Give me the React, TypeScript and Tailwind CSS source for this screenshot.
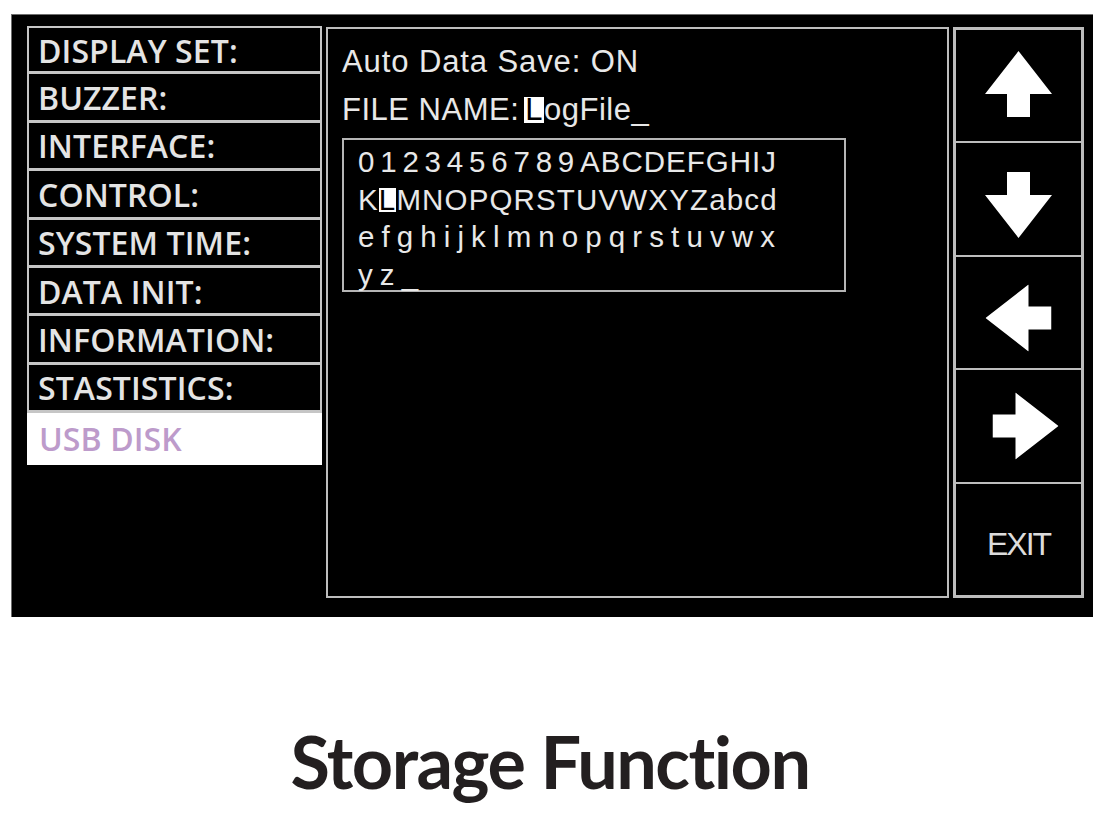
const menuItems = [
  'DISPLAY SET:',
  'BUZZER:',
  'INTERFACE:',
  'CONTROL:',
  'SYSTEM TIME:',
  'DATA INIT:',
  'INFORMATION:',
  'STASTISTICS:',
];

function Arrow({ rotate }: { rotate: string }) {
  return (
    <svg width="67" height="66" viewBox="0 0 67 66" className={rotate}>
      <polygon points="33.5,0 67,43 45,43 45,66 22,66 22,43 0,43" fill="#ffffff" />
    </svg>
  );
}

export default function App() {
  return (
    <div className="w-[1114px] h-[821px] bg-white overflow-hidden">
      {/* device screen */}
      <div className="ml-[11px] mt-[14px] w-[1082px] h-[603px] bg-black border-t border-l border-[#6e6e6e] flex pl-[15px] pt-[11px] gap-[4px]">
        {/* left menu */}
        <div className="w-[295px] flex flex-col font-['Open_Sans',sans-serif] font-semibold text-[32px] tracking-[0.1px] text-[#e4e4e4]">
          {menuItems.map((item, i) => (
            <div
              key={item}
              className={
                i === 0
                  ? 'h-[48.4px] border-x-2 border-t-2 border-b-[3px] border-[#c6c6c6] flex items-center pl-[9px] pt-[2px] leading-none'
                  : 'h-[48.4px] border-x-2 border-b-[3px] border-[#c6c6c6] flex items-center pl-[9px] pt-[2px] leading-none'
              }
            >
              {item}
            </div>
          ))}
          <div className="h-[52px] bg-white flex items-center pl-[12px] leading-none text-[#bd9bcb]">
            USB DISK
          </div>
        </div>

        {/* middle panel */}
        <div className="w-[623px] h-[571px] mt-[1px] border-2 border-[#bdbdbd] pl-[14px] pt-[17px] font-['Liberation_Sans',Arial,sans-serif] text-[#e8e8e8]">
          <div className="text-[31px] leading-[31px] h-[31px] tracking-[0.9px]">Auto Data Save: ON</div>
          <div className="mt-[17px] text-[31px] leading-[31px] h-[31px] tracking-[0.5px] flex items-baseline">
            <span>FILE NAME:</span>
            <span className="ml-[5px] inline-block bg-white text-black h-[26px] leading-[26px] px-[1px]">L</span>
            <span>ogFile_</span>
          </div>
          <div className="mt-[13px] w-[504px] h-[154px] border-2 border-[#b5b5b5] pl-[14px] pt-[3px] text-[29.5px] leading-[37.5px]">
            <div className="flex">
              <span className="tracking-[5.8px]">0123456789</span>
              <span className="tracking-[1px]">ABCDEFGHIJ</span>
            </div>
            <div className="flex items-baseline tracking-[1.15px]">
              <span>K</span>
              <span className="inline-block bg-white text-black h-[24px] leading-[24px]">L</span>
              <span>MNOPQRSTUVWXYZabcd</span>
            </div>
            <div className="tracking-[7.1px]">efghijklmnopqrstuvwx</div>
            <div className="tracking-[7.1px]">yz_</div>
          </div>
        </div>

        {/* right keys */}
        <div className="w-[131px] h-[571px] mt-[1px] border-[3px] border-[#bdbdbd] flex flex-col">
          <div className="flex-1 border-b-2 border-[#bdbdbd] flex items-center justify-center">
            <div className="mb-[3px]">
              <Arrow rotate="" />
            </div>
          </div>
          <div className="flex-1 border-b-2 border-[#bdbdbd] flex items-center justify-center">
            <div className="mt-[12px]">
              <Arrow rotate="rotate-180" />
            </div>
          </div>
          <div className="flex-1 border-b-2 border-[#bdbdbd] flex items-center justify-center">
            <div className="mt-[10px]">
              <Arrow rotate="-rotate-90" />
            </div>
          </div>
          <div className="flex-1 border-b-2 border-[#bdbdbd] flex items-center justify-center">
            <div className="ml-[14px]">
              <Arrow rotate="rotate-90" />
            </div>
          </div>
          <div className="flex-1 flex items-center justify-center">
            <span className="mt-[10px] font-['Liberation_Sans',Arial,sans-serif] text-[32px] leading-none tracking-[-2px] text-[#dcdcdc]">
              EXIT
            </span>
          </div>
        </div>
      </div>

      {/* caption */}
      <div className="mt-[108px] pr-[14px] text-center font-['Lato',sans-serif] font-bold text-[72px] leading-none tracking-[-1.5px] text-[#231f20]">
        Storage Function
      </div>
    </div>
  );
}
